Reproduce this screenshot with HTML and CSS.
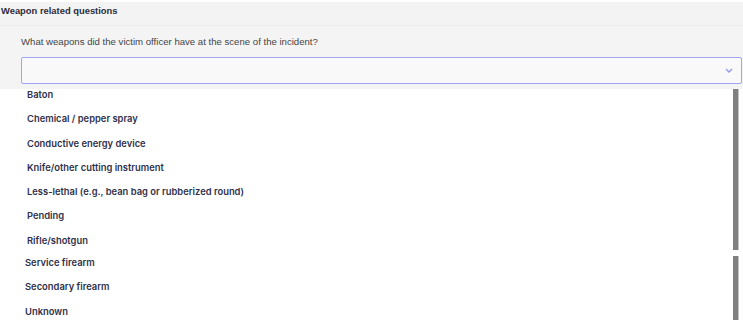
FILE: index.html
```html
<!DOCTYPE html>
<html lang="en">
<head>
  <meta charset="UTF-8">
  <title>Weapon related questions</title>
  <link rel="stylesheet" href="styles.css">
</head>
<body>
  <div class="panel">
    <div class="panel-header">Weapon related questions</div>

    <div class="panel-body">
      <label class="question" for="weapons">What weapons did the victim officer have at the scene of the incident?</label>
      <div class="select" id="weapons">
        <span class="select-value"></span>
        <svg class="select-arrow" width="8" height="5" viewBox="0 0 8 5">
          <path d="M1 1 L4 4 L7 1" fill="none" stroke="#8d96ea" stroke-width="1.3"/>
        </svg>
      </div>
    </div>

    <!-- Lista de opções -->
    <div class="options">
      <ul class="options-list">
        <li>Baton</li>
        <li>Chemical / pepper spray</li>
        <li>Conductive energy device</li>
        <li>Knife/other cutting instrument</li>
        <li>Less-lethal (e.g., bean bag or rubberized round)</li>
        <li>Pending</li>
        <li>Rifle/shotgun</li>
      </ul>
      <div class="scroll-thumb"></div>
    </div>

    <div class="options options-second">
      <ul class="options-list">
        <li>Service firearm</li>
        <li>Secondary firearm</li>
        <li>Unknown</li>
      </ul>
      <div class="scroll-thumb"></div>
    </div>
  </div>
</body>
</html>
```

FILE: styles.css
```css
/* Base */
* {
  margin: 0;
  padding: 0;
  box-sizing: border-box;
}

body {
  background-color: #fff;
  font-family: 'Liberation Sans', Arial, sans-serif;
  color: #333;
  width: 743px;
  height: 320px;
  overflow: hidden;
}

.panel {
  padding-top: 2px;
}

/* Cabeçalho */
.panel-header {
  background-color: #f3f3f3;
  border-bottom: 1px solid #ececec;
  height: 24px;
  padding: 3px 0 0 1px;
  font-size: 9.4px;
  font-weight: bold;
  color: #2c2c3c;
}

.panel-body {
  background-color: #f4f4f4;
  padding: 10px 1px 5px 21px;
}

.question {
  display: block;
  font-size: 9.6px;
  color: #454545;
  line-height: 12px;
  margin-bottom: 9px;
}

/* Select */
.select {
  display: flex;
  align-items: center;
  justify-content: flex-end;
  height: 27px;
  background-color: #f9f9f9;
  border: 1px solid #9ea6f2;
  border-radius: 2px;
  padding-right: 8px;
}

/* Opções */
.options {
  display: flex;
  height: 161px;
  overflow: hidden;
}

.options-second {
  margin-top: 6px;
  height: 65px;
}

.options-list {
  list-style: none;
  flex: 1;
  padding-left: 27px;
}

.options-second .options-list {
  padding-left: 25px;
}

.options-list li {
  height: 24.3px;
  font-family: Inter, 'Noto Sans', sans-serif;
  font-size: 9.4px;
  font-weight: 600;
  line-height: 11px;
  color: #30304a;
}

.options-second .options-list li {
  padding-top: 1px;
}

.scroll-thumb {
  width: 6px;
  margin-right: 4px;
  background-color: #808080;
  border-right: 1px solid #c4c4c4;
}
```
